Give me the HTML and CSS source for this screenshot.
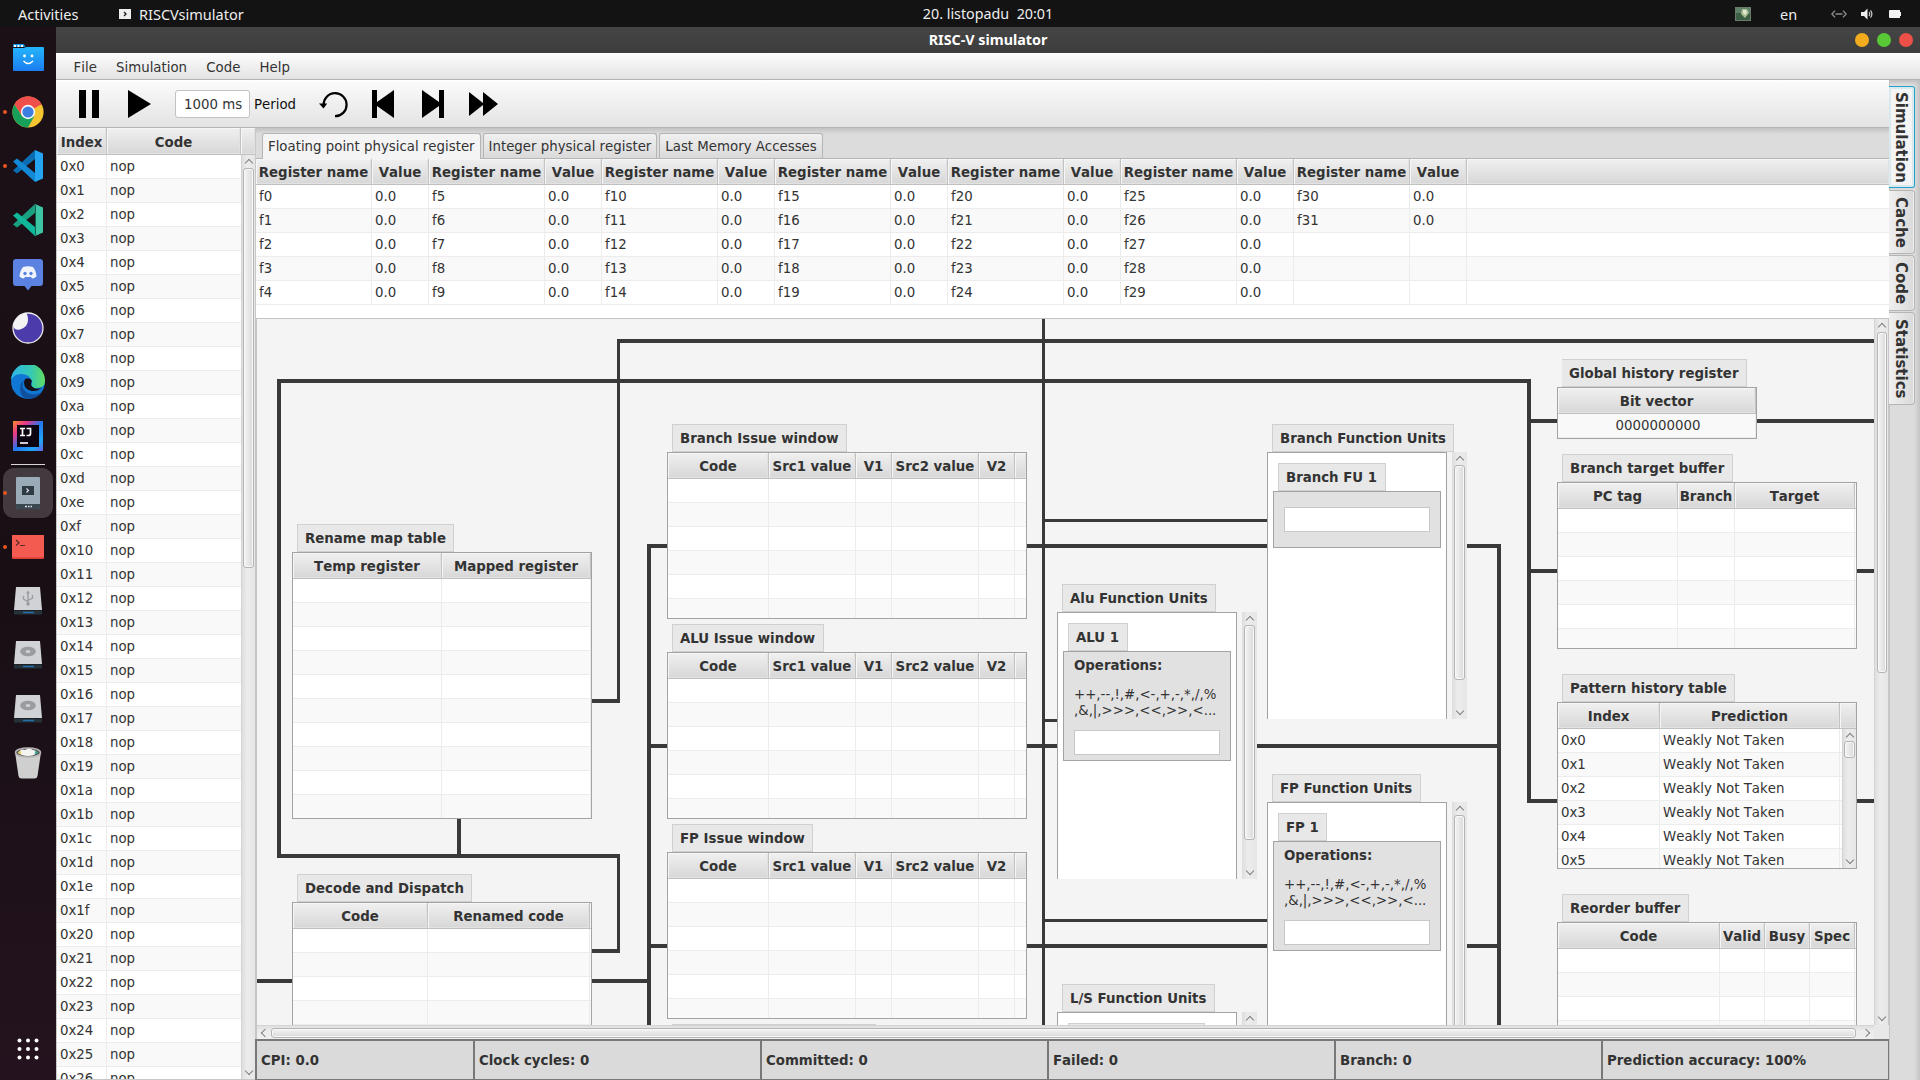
FILE: index.html
```html
<!DOCTYPE html>
<html lang="en">
<head>
<meta charset="utf-8">
<title>RISC-V simulator</title>
<link rel="stylesheet" href="styles.css">
</head>
<body>
<header class="panel">
  <div class="panel-left">
    <span class="activities">Activities</span>
    <svg class="app-glyph" width="12" height="10" viewBox="0 0 12 10"><rect width="12" height="10" fill="#eee"/><path d="M5 3l2 2-2 2" fill="none" stroke="#222" stroke-width="1.4"/></svg>
    <span>RISCVsimulator</span>
  </div>
  <div class="clock">20. listopadu&nbsp; 20:01</div>
  <div class="tray">
    <svg class="tray-picture" width="16" height="14" viewBox="0 0 16 14"><rect width="16" height="14" fill="#6b7b6b"/><rect x="1" y="1" width="14" height="12" fill="#3a5f45"/><path d="M1 1h14v5H1z" fill="#5d8066"/><path d="M7 2h5l2 4-4 5-4-4z" fill="#a9bd92"/><path d="M8 3h3l1 3-2 2-2-2z" fill="#e0e6cc"/></svg>
    <span class="lang">en</span>
    <svg class="tray-net" width="16" height="8" viewBox="0 0 16 8" fill="none" stroke="#8c8c8c" stroke-width="1.4"><path d="M4 .6L.9 4 4 7.4M12 .6L15.100 4 12 7.400M4.500 4h7"/></svg>
    <svg class="tray-sound" width="13" height="12" viewBox="0 0 13 12"><path d="M0 4h3l3.500-3.500v11L3 8H0z" fill="#eee"/><path d="M8 4q1.500 2 0 4M9.500 2.300q2.800 3.700 0 7.400" fill="none" stroke="#ccc" stroke-width="1.200"/></svg>
    <svg class="tray-battery" width="12" height="8" viewBox="0 0 12 8"><path d="M1 0h10v2h1v4h-1v2H1q-1 0-1-1V1q0-1 1-1z" fill="#f2f2f2"/></svg>
  </div>
</header>

<div class="desktop">
<nav class="dock">
  <div class="dock-item"><svg width="32" height="30" viewBox="0 0 32 30"><defs><linearGradient id="gFiles" x2="0" y2="1"><stop offset="0" stop-color="#25b5fb"/><stop offset="1" stop-color="#1a7cf0"/></linearGradient></defs><path d="M1 2q0-1 1-1h9q1 0 1.500 1l.500 2H1z" fill="#1596e8"/><path d="M1 5h11l2-1h17q1 0 1 1v22q0 1-1 1H2q-1 0-1-1z" fill="url(#gFiles)"/><path d="M2 2h2v2H2zM5.500 2h2v2h-2zM9 2h2v2H9z" fill="#fff"/><circle cx="12.500" cy="13" r="1.400" fill="#fff"/><circle cx="20" cy="13" r="1.400" fill="#fff"/><path d="M11.500 18q4.700 5 9.500 0" fill="none" stroke="#fff" stroke-width="1.400"/></svg></div>
  <div class="dock-item running"><svg width="32" height="34" viewBox="-16 -17 32 34"><circle r="15.600" fill="#f5c431"/><path d="M0 0L-13.500-7.800A15.600 15.600 0 0 1 13.500-7.800z" fill="#ee4f4b"/><path d="M-13.500-7.800A15.600 15.600 0 0 0 0 15.600L6.500 3.800-6 4z" fill="#16a05a"/><path d="M0-7.200h13.800A15.600 15.600 0 0 0-13.500-7.800L-6.200 3.600z" fill="#ee4f4b"/><circle r="7.200" fill="#f6f6f6"/><circle r="5.600" fill="#3b7de0"/></svg></div>
  <div class="dock-item running"><svg width="30" height="32" viewBox="0 0 30 32"><path d="M22 0l8 3.500v25L22 32z" fill="#25a4f2"/><path d="M22 0v9L4 23.500 0 20.500z" fill="#0a6eb5"/><path d="M22 32v-9L4 8.500 0 11.500z" fill="#1389d6"/></svg></div>
  <div class="dock-item"><svg width="30" height="32" viewBox="0 0 30 32"><path d="M22 0l8 3.500v25L22 32z" fill="#3cc4a4"/><path d="M22 0v9L4 23.500 0 20.500z" fill="#1a9f80"/><path d="M22 32v-9L4 8.500 0 11.500z" fill="#10b79a"/><path d="M22.500 1v30" stroke="#12614f" stroke-width="1"/></svg></div>
  <div class="dock-item"><svg width="30" height="33" viewBox="0 0 30 33"><path d="M3 1h24q3 0 3 3v21q0 3-3 3h-8.500L15 32.500 11.500 28H3q-3 0-3-3V4q0-3 3-3z" fill="#5b82e0"/><path d="M10 9q5-1.500 10 0 3 3.500 3.500 9.500-2 1.800-4.500 2l-1-1.800q-3 .800-6 0L11 20.500q-2.500-.200-4.500-2Q7 12.500 10 9z" fill="#f1f4fd"/><circle cx="12" cy="15.500" r="1.700" fill="#5b82e0"/><circle cx="18" cy="15.500" r="1.700" fill="#5b82e0"/></svg></div>
  <div class="dock-item"><svg width="32" height="32" viewBox="0 0 32 32"><circle cx="16" cy="16" r="15" fill="#4c3cab" stroke="#eee" stroke-width="1.300"/><path d="M16 1A15 15 0 0 0 1.200 14Q3 19 8 17.500 16 15 16 8 16 3 14 1z" fill="#f3f3f3"/></svg></div>
  <div class="dock-item"><svg width="34" height="34" viewBox="0 0 34 34"><defs><linearGradient id="gEdge"><stop offset="0" stop-color="#2eb5e8"/><stop offset=".6" stop-color="#36c9b0"/><stop offset="1" stop-color="#62dd60"/></linearGradient></defs><circle cx="17" cy="17" r="16.900" fill="#1177d4"/><path d="M0 15A17 17 0 0 1 34 16q0 7-8 7-6 0-5.500-3 1-2 0-5Q18 9 10 9 3 9 0 15z" fill="url(#gEdge)"/><path d="M13 15q-4 7 2 12 7 5 16 0-5 7-14 7Q9 32 9 24q0-6 4-9z" fill="#10509d"/><path d="M14 14q5-2 7 2-2 3 0 5.500 4 4 10 1-4 4-10 3.500-8-1-8-9z" fill="#170f16"/></svg></div>
  <div class="dock-item"><svg width="30" height="30" viewBox="0 0 30 30"><defs><linearGradient id="gIj" x2="1" y2="1"><stop offset="0" stop-color="#ff8b2b"/><stop offset=".25" stop-color="#e8368a"/><stop offset=".5" stop-color="#2277f0"/><stop offset=".8" stop-color="#21a5f6"/><stop offset="1" stop-color="#6b60e8"/></linearGradient></defs><rect width="30" height="30" fill="url(#gIj)"/><rect x="4" y="4" width="22" height="22" fill="#0c0410"/><path d="M7 7.500h5M7 14.500h5M9.500 7.500v7M13.500 7.500h4v5q0 2-2 2h-2" fill="none" stroke="#fff" stroke-width="1.700"/><path d="M7 22h8" stroke="#fff" stroke-width="1.600"/></svg></div>
  <div class="dock-separator"></div>
  <div class="dock-item running active"><svg width="24" height="34" viewBox="0 0 24 34"><rect width="24" height="32" y="1" rx="1" fill="#9aaab6"/><path d="M0 28h24v4q0 1-1 1H1q-1 0-1-1z" fill="#3a474f"/><rect x="6" y="10" width="12" height="9" fill="#2f3b42"/><path d="M10.500 12.500l2 2-2 2" fill="none" stroke="#dde" stroke-width="1.200"/><path d="M9 30.500h2M12 30.500h1.500M14.500 30.500h1.500" stroke="#dde" stroke-width="1.500"/></svg></div>
  <div class="dock-item running"><svg width="32" height="24" viewBox="0 0 32 24"><rect width="32" height="24" rx="1" fill="#d63c32"/><rect width="32" height="22.500" rx="1" fill="#f35a50"/><path d="M4 5l3 2.800L4 10.500M8 10.500h5" fill="none" stroke="#5c2a2a" stroke-width="1.200"/></svg></div>
  <div class="dock-item"><svg width="28" height="28" viewBox="0 0 28 28"><path d="M2 0h24l2 23H0z" fill="#d0d2d6"/><path d="M0 23.500h28v4H0z" fill="#26323a"/><path d="M9 25.500h11" stroke="#2470a8" stroke-width="1.500"/><path d="M14 5v12M9.500 9v3l4.500 3M18.500 8v3L14 13.500" fill="none" stroke="#9a9ca0" stroke-width="1.400"/><path d="M14 3.500l2 3h-4z" fill="#9a9ca0"/><circle cx="14" cy="17" r="1.800" fill="#9a9ca0"/></svg></div>
  <div class="dock-item"><svg width="28" height="28" viewBox="0 0 28 28"><path d="M2 0h24l2 23H0z" fill="#d0d2d6"/><path d="M0 23.500h28v4H0z" fill="#26323a"/><path d="M9 25.500h11" stroke="#2470a8" stroke-width="1.500"/><ellipse cx="14" cy="10.500" rx="7.800" ry="4.800" fill="#9a9ca0"/><ellipse cx="14" cy="10.500" rx="2.400" ry="1.500" fill="#d0d2d6"/></svg></div>
  <div class="dock-item"><svg width="28" height="28" viewBox="0 0 28 28"><path d="M2 0h24l2 23H0z" fill="#d0d2d6"/><path d="M0 23.500h28v4H0z" fill="#26323a"/><path d="M9 25.500h11" stroke="#2470a8" stroke-width="1.500"/><ellipse cx="14" cy="10.500" rx="7.800" ry="4.800" fill="#9a9ca0"/><ellipse cx="14" cy="10.500" rx="2.400" ry="1.500" fill="#d0d2d6"/></svg></div>
  <div class="dock-item"><svg width="28" height="32" viewBox="0 0 28 32"><path d="M1 5h26l-3.500 24q-.500 2.500-3 2.500h-13q-2.500 0-3-2.500z" fill="#cfcfcf"/><ellipse cx="14" cy="5.500" rx="12.500" ry="4.500" fill="#555" stroke="#b5b5b5" stroke-width="1.500"/><path d="M4 6q3-5 7-3 4-3 8 0 4 1 4 3-3 3-9 3T4 6z" fill="#f4f4f0"/><path d="M3.500 5.500l3-2 1 4z" fill="#e8ce5a"/><path d="M24.500 5.500l-3-2-1 4z" fill="#37a895"/></svg></div>
  <div class="dock-item show-apps"><svg width="24" height="24" viewBox="0 0 24 24" fill="#fff"><circle cx="3.500" cy="3.500" r="2"/><circle cx="12" cy="3.500" r="2"/><circle cx="20.500" cy="3.500" r="2"/><circle cx="3.500" cy="12" r="2"/><circle cx="12" cy="12" r="2"/><circle cx="20.500" cy="12" r="2"/><circle cx="3.500" cy="20.500" r="2"/><circle cx="12" cy="20.500" r="2"/><circle cx="20.500" cy="20.500" r="2"/></svg></div>
</nav>

<div class="window">
  <div class="titlebar">
    <span class="title">RISC-V simulator</span>
    <span class="dot minimize"></span><span class="dot maximize"></span><span class="dot close"></span>
  </div>
  <div class="menubar"><span>File</span><span>Simulation</span><span>Code</span><span>Help</span></div>

  <div class="body">
    <div class="main">
      <div class="toolbar">
        <svg class="tb-pause" width="22" height="28" viewBox="0 0 22 28"><path d="M1 0h7v28H1zM14 0h7v28h-7z"/></svg>
        <svg class="tb-play" width="23" height="28" viewBox="0 0 23 28"><path d="M0 0l23 14L0 28z"/></svg>
        <span class="period-field">1000 ms</span>
        <span class="period-label">Period</span>
        <svg class="tb-reset" width="29" height="27" viewBox="0 0 29 27"><path d="M4.600 14A11.500 11.500 0 1 1 16 25.200" fill="none" stroke="#000" stroke-width="2.200"/><path d="M0 12.500h8.200L4.500 17.500z"/></svg>
        <svg class="tb-prev" width="22" height="28" viewBox="0 0 22 28"><path d="M0 0h5v12L22 0v28L5 16v12H0z"/></svg>
        <svg class="tb-next" width="22" height="28" viewBox="0 0 22 28"><path d="M22 0h-5v12L0 0v28l17-12v12h5z"/></svg>
        <svg class="tb-fast" width="29" height="24" viewBox="0 0 29 24"><path d="M0 0l14 11V0l15 12-15 12V13L0 24z"/></svg>
      </div>

      <div class="workspace">
        <section class="code-pane">
          <div class="head code-cols"><span>Index</span><span>Code</span><span></span></div>
          <div class="code-view">
            <div class="code-rows" id="code-rows"></div>
            <div class="vscroll"><i class="chev up"></i><b class="thumb code-thumb"></b><i class="chev down"></i></div>
          </div>
        </section>

        <section class="center">
          <div class="tabs"><span class="tab selected">Floating point physical register</span><span class="tab">Integer physical register</span><span class="tab">Last Memory Accesses</span></div>
          <div class="registers">
            <div class="head reg-cols" id="reg-head"></div>
            <div id="reg-rows"></div>
          </div>

          <div class="scroller">
            <div class="canvas">
              <svg class="wires" width="1617" height="706" viewBox="257 319 1617 706" fill="#393939" shape-rendering="crispEdges">
                <path d="M617 339h1257v4H617zM617 339h3v364h-3zM592 699h28v4h-28z"/>
                <path d="M277 379h1254v4H277zM277 379h4v479h-4zM277 854h343v4H277zM457 819h4v35h-4zM617 854h3v99h-3zM592 949h28v4h-28z"/>
                <path d="M257 979h35v4h-35zM592 979h59v4h-59zM647 544h4v481h-4zM647 544h20v4h-20zM647 744h20v4h-20zM647 944h20v4h-20z"/>
                <path d="M1027 544h240v4h-240zM1027 744h30v4h-30zM1027 944h240v4h-240zM1042 319h3v706h-3z"/>
                <path d="M1045 519h222v3h-222zM1045 719h12v3h-12zM1045 919h222v3h-222z"/>
                <path d="M1497 544h4v481h-4zM1467 544h30v4h-30zM1257 744h240v4h-240zM1467 944h30v4h-30z"/>
                <path d="M1527 379h4v424h-4zM1531 419h26v4h-26zM1757 419h117v4h-117zM1531 569h26v4h-26zM1857 569h17v4h-17zM1531 799h26v4h-26zM1857 799h17v4h-17z"/>
              </svg>

              <div class="node n-rename"><h3>Rename map table</h3>
                <div class="table rename-cols" data-rows="10"><div class="head"><span>Temp register</span><span>Mapped register</span><span></span></div></div></div>
              <div class="node n-decode"><h3>Decode and Dispatch</h3>
                <div class="table decode-cols" data-rows="6"><div class="head"><span>Code</span><span>Renamed code</span><span></span></div></div></div>

              <div class="node issue n-issue-branch"><h3>Branch Issue window</h3>
                <div class="table issue-cols" data-rows="6"><div class="head"><span>Code</span><span>Src1 value</span><span>V1</span><span>Src2 value</span><span>V2</span><span></span></div></div></div>
              <div class="node issue n-issue-alu"><h3>ALU Issue window</h3>
                <div class="table issue-cols" data-rows="6"><div class="head"><span>Code</span><span>Src1 value</span><span>V1</span><span>Src2 value</span><span>V2</span><span></span></div></div></div>
              <div class="node issue n-issue-fp"><h3>FP Issue window</h3>
                <div class="table issue-cols" data-rows="6"><div class="head"><span>Code</span><span>Src1 value</span><span>V1</span><span>Src2 value</span><span>V2</span><span></span></div></div></div>
              <div class="node issue n-issue-ls"><h3></h3></div>

              <div class="node units n-fu-branch"><h3>Branch Function Units</h3>
                <div class="units-view"><div class="units-list"><h3>Branch FU 1</h3><div class="unit"><div class="field"></div></div></div>
                <div class="vscroll"><i class="chev up"></i><b class="thumb"></b><i class="chev down"></i></div></div></div>
              <div class="node units n-fu-alu"><h3>Alu Function Units</h3>
                <div class="units-view"><div class="units-list"><h3>ALU 1</h3><div class="unit with-ops"><strong>Operations:</strong><p>++,--,!,#,&lt;-,+,-,*,/,%<br>,&amp;,|,&gt;&gt;&gt;,&lt;&lt;,&gt;&gt;,&lt;...</p><div class="field"></div></div></div>
                <div class="vscroll"><i class="chev up"></i><b class="thumb"></b><i class="chev down"></i></div></div></div>
              <div class="node units n-fu-fp"><h3>FP Function Units</h3>
                <div class="units-view"><div class="units-list"><h3>FP 1</h3><div class="unit with-ops"><strong>Operations:</strong><p>++,--,!,#,&lt;-,+,-,*,/,%<br>,&amp;,|,&gt;&gt;&gt;,&lt;&lt;,&gt;&gt;,&lt;...</p><div class="field"></div></div></div>
                <div class="vscroll"><i class="chev up"></i><b class="thumb"></b><i class="chev down"></i></div></div></div>
              <div class="node units n-fu-ls"><h3>L/S Function Units</h3>
                <div class="units-view"><div class="units-list"><h3></h3></div>
                <div class="vscroll"><i class="chev up"></i><b class="thumb"></b><i class="chev down"></i></div></div></div>

              <div class="node n-ghr"><h3>Global history register</h3>
                <div class="table ghr-cols"><div class="head"><span>Bit vector</span><span></span></div><div class="row"><span>0000000000</span><span></span></div></div></div>
              <div class="node n-btb"><h3>Branch target buffer</h3>
                <div class="table btb-cols" data-rows="6"><div class="head"><span>PC tag</span><span>Branch</span><span>Target</span><span></span></div></div></div>
              <div class="node n-pht"><h3>Pattern history table</h3>
                <div class="table pht-cols"><div class="head"><span>Index</span><span>Prediction</span><span></span></div>
                  <div class="pht-view"><div id="pht-rows"></div><div class="vscroll"><i class="chev up"></i><b class="thumb pht-thumb"></b><i class="chev down"></i></div></div></div></div>
              <div class="node n-rob"><h3>Reorder buffer</h3>
                <div class="table rob-cols" data-rows="5"><div class="head"><span>Code</span><span>Valid</span><span>Busy</span><span>Spec</span><span></span></div></div></div>
            </div>
            <div class="vscroll canvas-v"><i class="chev up"></i><b class="thumb canvas-thumb"></b><i class="chev down"></i></div>
            <div class="hscroll"><i class="chev left"></i><b class="thumb"></b><i class="chev right"></i></div>
          </div>

          <footer class="stats"><span>CPI: 0.0</span><span>Clock cycles: 0</span><span>Committed: 0</span><span>Failed: 0</span><span>Branch: 0</span><span>Prediction accuracy: 100%</span></footer>
        </section>
      </div>
    </div>

    <aside class="side-tabs"><span class="side-tab focused t-simulation">Simulation</span><span class="side-tab t-cache">Cache</span><span class="side-tab t-code">Code</span><span class="side-tab t-statistics">Statistics</span></aside>
  </div>
</div>
</div>
<script src="app.js"></script>
</body>
</html>
```

FILE: styles.css
```css
* { box-sizing: border-box; }

body {
  margin: 0;
  width: 1920px;
  height: 1080px;
  overflow: hidden;
  display: flex;
  flex-direction: column;
  background: #1b1016;
  color: #333;
  font: 13.333px/16px "DejaVu Sans", sans-serif;
  font-kerning: none;
}
svg { display: block; flex: none; }
h3, p { margin: 0; }

/* system panel */
.panel {
  height: 27px;
  flex: none;
  display: grid;
  grid-template-columns: 922px 132px 1fr;
  align-items: center;
  background: #131313;
  color: #eee;
  font: 14.5px/26px "Noto Sans", sans-serif;
}
.panel-left { display: flex; align-items: center; padding-left: 18px; }
.activities { width: 101px; }
.app-glyph { margin-right: 8px; }
.clock { text-align: center; white-space: nowrap; font-size: 14.3px; line-height: 25px; padding-bottom: 1px; }
.tray { display: flex; align-items: center; padding-left: 681px; }
.lang { width: 51px; padding-left: 29px; box-sizing: content-box; }
.tray-net { margin-right: 14px; }
.tray-sound { margin-right: 15px; }

.desktop { flex: 1; display: flex; min-height: 0; }

/* dock */
.dock {
  width: 56px;
  flex: none;
  display: flex;
  flex-direction: column;
  padding: 4px 0 4px;
  background: linear-gradient(#1c1017, #180f15 55%, #24131e);
}
.dock-item {
  height: 54px;
  flex: none;
  display: flex;
  align-items: center;
  justify-content: center;
  position: relative;
}
.dock-item.running::before {
  content: "";
  position: absolute;
  left: 3px;
  top: 25px;
  width: 4px;
  height: 4px;
  border-radius: 50%;
  background: #e95420;
}
.dock-item.active { height: 50px; margin: 2px 3px; border-radius: 11px; background: #433a40; }
.dock-item.active::before { left: 0; top: 23px; }
.dock-separator { height: 1px; flex: none; margin: 1px 11px; background: #d8d5d6; }
.show-apps { margin-top: auto; }

/* window frame */
.window { flex: 1; display: flex; flex-direction: column; min-width: 0; background: #f4f4f4; }
.titlebar {
  height: 26px;
  flex: none;
  display: flex;
  align-items: center;
  padding-right: 7px;
  background: linear-gradient(#454545, #3d3d3d);
  color: #fff;
}
.title { flex: 1; padding-left: 73px; text-align: center; font: bold 14.3px/26px "Noto Sans", sans-serif; }
.dot { width: 14px; height: 14px; margin-left: 8px; border-radius: 50%; }
.minimize { background: #f2ac1e; }
.maximize { background: #59c837; }
.close { background: #ec5049; }
.menubar {
  height: 27px;
  flex: none;
  display: flex;
  align-items: center;
  padding-left: 8px;
  background: linear-gradient(#fdfdfd, #e3e3e3);
  border-bottom: 1px solid #b5b5b5;
}
.menubar span { padding: 3px 9.6px 0; }

.body { flex: 1; display: flex; min-height: 0; }
.main { width: 1833px; flex: none; display: flex; flex-direction: column; }

.toolbar {
  height: 48px;
  flex: none;
  display: flex;
  align-items: center;
  padding: 1px 0 0 22px;
  background: linear-gradient(#fff, #fafafa 3px, #e3e3e3);
  border-bottom: 1px solid #b5b5b5;
}
.tb-play { margin-left: 28px; }
.period-field {
  width: 75px;
  height: 28px;
  margin-left: 24px;
  padding-left: 8px;
  border: 1px solid #c2c2c2;
  border-radius: 3px;
  background: #fff;
  line-height: 28px;
}
.period-label { width: 65px; padding: 1px 0 0 4px; color: #111; }
.tb-reset { margin-left: 4px; }
.tb-prev { margin-left: 24px; }
.tb-next { margin-left: 28px; }
.tb-fast { margin-left: 25px; }

.workspace { flex: 1; display: flex; min-height: 0; }

/* tables */
.head, .row { display: grid; grid-template-columns: var(--cols); }
.head {
  height: 26px;
  background: linear-gradient(#f0f0f0, #d7d7d7);
  border-bottom: 1px solid #c0c0c0;
  font-weight: bold;
  line-height: 27px;
  text-align: center;
  white-space: nowrap;
  grid-template-rows: 25px;
}
.head span {
  min-width: 0;
  border-right: 1px solid #c3c3c3;
  box-shadow: inset 1px 1px 0 #f6f6f6, inset -1px -1px 0 #e2e2e2;
}
.head span:last-child { border-right: 0; }
.row { height: 24px; line-height: 23px; background: #fff; border-bottom: 1px solid #ececec; }
.row:nth-child(even) { background: #f9f9f9; }
.row span { padding-left: 3px; border-right: 1px solid #ececec; min-width: 0; white-space: nowrap; overflow: hidden; }
.row span:last-child { border-right: 0; }

.code-pane {
  width: 200px;
  flex: none;
  display: flex;
  flex-direction: column;
  border: 1px solid #c8c8c8;
  border-top: 0;
}
.code-pane .head { height: 27px; grid-template-rows: 26px; line-height: 29px; flex: none; }
.code-cols, .code-rows { --cols: 50px 134px 1fr; }
.code-view { flex: 1; display: flex; min-height: 0; }
.code-rows { width: 184px; overflow: hidden; }
.code-rows .row { grid-template-columns: 50px 134px; }

/* scroll bars */
.vscroll, .hscroll { display: flex; align-items: center; flex: none; }
.vscroll {
  width: 14px;
  flex-direction: column;
  border-left: 1px solid #d4d4d4;
  background: linear-gradient(90deg, #dedede, #ececec 40%, #e6e6e6);
}
.hscroll {
  border-top: 1px solid #d4d4d4;
  background: linear-gradient(#e0e0e0, #ececec 40%, #f0f0f0);
}
.thumb { border: 1px solid #b4b4b4; border-radius: 3px; flex: none; box-shadow: inset 0 0 0 1px #f8f8f8; }
.vscroll .thumb { width: 11px; background: linear-gradient(90deg, #f4f4f4, #dadada); }
.hscroll .thumb { height: 10px; background: linear-gradient(#f4f4f4, #dadada); }
.chev { width: 6px; height: 6px; flex: none; border: solid #808080; border-width: 1.3px 0 0 1.3px; }
.chev.up { transform: rotate(45deg); margin: 5px 0 2px; }
.chev.down { transform: rotate(225deg); margin: auto 0 5px; }
.chev.left { transform: rotate(-45deg); margin: 0 3px 0 5px; }
.chev.right { transform: rotate(135deg); margin: 0 5px 0 auto; }
.code-thumb { height: 400px; }

/* centre column */
.center { width: 1633px; flex: none; display: flex; flex-direction: column; }
.tabs {
  height: 31px;
  flex: none;
  display: flex;
  align-items: flex-end;
  gap: 2px;
  padding-left: 6px;
  background: linear-gradient(#c2c2c2, #dcdcdc 6px);
  border-bottom: 1px solid #b5b5b5;
}
.tab {
  height: 25px;
  padding: 0 5px;
  border: 1px solid #b5b5b5;
  border-bottom: 0;
  border-radius: 3px 3px 0 0;
  background: linear-gradient(#f0f0f0, #dadada);
  line-height: 25px;
  white-space: nowrap;
}
.tab.selected { height: 26px; margin-bottom: -1px; background: #f4f4f4; }
.registers { height: 160px; flex: none; background: #fff; border-bottom: 1px solid #c4c4c4; overflow: hidden; }
.registers { --cols: repeat(7, 116px 57px) 1fr; }

.scroller {
  flex: none;
  display: grid;
  grid-template: 706px 14px / 1617px 15px;
  padding-left: 2px;
  margin-left: -1px;
  background: #e8e8e8;
  box-shadow: inset 2px 0 0 #c6c6c6;
}
.canvas { position: relative; overflow: hidden; background: #f4f4f4; }
.wires { position: absolute; left: 0; top: 0; }
.canvas-v { width: 15px; border-right: 1px solid #c6c6c6; }
.canvas-v .thumb { width: 10px; }
.canvas-thumb { height: 341px; }
.hscroll .thumb { width: 1585px; }

/* diagram blocks */
.node { position: absolute; }
.node h3 {
  width: max-content;
  height: 28px;
  margin-left: 5px;
  padding: 0 7.5px 0 7px;
  border: 1px solid #d0d0d0;
  background: #e8e8e8;
  font: bold 13.333px/27px "DejaVu Sans", sans-serif;
  white-space: nowrap;
}
.table { border: 1px solid #a3a3a3; background: #fff; overflow: hidden; }

.rename-cols { --cols: 149px 149px 1fr; width: 300px; height: 267px; }
.decode-cols { --cols: 135px 162px 1fr; width: 300px; height: 167px; }
.issue-cols { --cols: 101px 87px 36px 87px 36px 1fr; width: 360px; height: 167px; }
.ghr-cols { --cols: 198px 0; width: 200px; height: 52px; text-align: center; }
.btb-cols { --cols: 120px 57px 120px 1fr; width: 300px; height: 167px; }
.pht-cols { --cols: 102px 180px 1fr; width: 300px; height: 167px; }
.rob-cols { --cols: 162px 45px 45px 45px 1fr; width: 300px; height: 167px; }

.n-rename { left: 35px; top: 205px; }
.n-decode { left: 35px; top: 555px; }
.n-issue-branch { left: 410px; top: 105px; }
.n-issue-alu { left: 410px; top: 305px; }
.n-issue-fp { left: 410px; top: 505px; }
.n-issue-ls { left: 410px; top: 705px; }
.n-issue-ls h3 { width: 204px; }
.n-fu-branch { left: 1010px; top: 105px; }
.n-fu-alu { left: 800px; top: 265px; }
.n-fu-fp { left: 1010px; top: 455px; }
.n-fu-ls { left: 800px; top: 665px; }
.n-ghr { left: 1300px; top: 40px; }
.n-ghr h3 { border-left: 0; }
.n-btb { left: 1300px; top: 135px; }
.n-pht { left: 1300px; top: 355px; }
.n-rob { left: 1300px; top: 575px; }

.pht-view { display: flex; height: 139px; }
.pht-view > div:first-child { width: 284px; }
.pht-view .row { grid-template-columns: 102px 180px 1fr; }
.pht-view .chev.up { margin-bottom: 1px; }
.pht-thumb { height: 17px; }

.units-view { display: flex; gap: 5px; height: 267px; }
.units-list { width: 180px; padding: 10px 5px; border: 1px solid #a3a3a3; border-bottom: 0; background: #fff; }
.units .vscroll { width: 15px; border-left: 0; }
.units .thumb { height: 215px; }
.unit { width: 168px; padding: 15px 10px; border: 1px solid #a3a3a3; background: #e1e1e1; }
.unit.with-ops { padding: 6px 10px 5px; }
.unit p { height: 32px; margin: 13px -5px 11px 0; white-space: nowrap; }
.unit strong { display: block; }
.field { width: 146px; height: 25px; border: 1px solid #c8c8c8; background: #fff; }
.n-fu-ls .units-list h3 { width: 137px; }

/* status bar */
.stats {
  flex: 1;
  display: grid;
  grid-template-columns: 218px 287px 287px 287px 267px 1fr;
  margin-left: -1px;
  background: #dadada;
  border-top: 2px solid #787878;
  border-bottom: 1px solid #787878;
  border-right: 1px solid #787878;
  font-weight: bold;
  line-height: 40px;
  grid-template-rows: 38px;
}
.stats span { padding-left: 4px; border-left: 2px solid #787878; }

/* vertical tabs */
.side-tabs {
  flex: 1;
  display: flex;
  flex-direction: column;
  gap: 1px;
  padding-top: 6px;
  background:
    linear-gradient(#c0c0c0, transparent 5px),
    linear-gradient(90deg, #c6c6c6 1px, #dcdcdc 1px, #dcdcdc 25px, #c4c4c4);
}
.side-tab {
  width: 26px;
  display: flex;
  align-items: center;
  justify-content: center;
  padding-right: 2px;
  border: 1px solid #b5b5b5;
  border-left: 0;
  border-radius: 0 4px 4px 0;
  background: linear-gradient(90deg, #f0f0f0, #d9d9d9);
  box-shadow: inset -1px 0 0 #efefef;
  writing-mode: vertical-rl;
  font: bold 15px/23px "DejaVu Sans", sans-serif;
}
.side-tab.focused { border-color: #22a1cb; border-radius: 0 3px 3px 0; background: #f4f4f4; box-shadow: inset 0 0 0 2px #d8e9f0; }
.t-simulation { height: 102px; margin-bottom: 1px; }
.t-cache { height: 64px; }
.t-code { height: 56px; }
.t-statistics { height: 93px; }
```

FILE: app.js
```js
const row = cells => '<div class="row">' + cells.map(c => '<span>' + c + '</span>').join('') + '</div>';
const fill = (id, html) => { document.getElementById(id).innerHTML = html; };

// Program memory: every slot holds a nop until code is loaded.
fill('code-rows', Array.from({ length: 39 }, (_, i) => row(['0x' + i.toString(16), 'nop'])).join(''));

// Floating point registers f0..f31, five per column.
fill('reg-head', '<span>Register name</span><span>Value</span>'.repeat(7) + '<span></span>');
fill('reg-rows', Array.from({ length: 5 }, (_, r) => {
  const cells = [];
  for (let c = 0; c < 7; c++) {
    const n = c * 5 + r;
    cells.push(n < 32 ? 'f' + n : '', n < 32 ? '0.0' : '');
  }
  cells.push('');
  return row(cells);
}).join(''));

fill('pht-rows', Array.from({ length: 6 }, (_, i) => row(['0x' + i, 'Weakly Not Taken', ''])).join(''));

// Pipeline tables start out empty.
document.querySelectorAll('.table[data-rows]').forEach(table => {
  const columns = table.querySelectorAll('.head span').length;
  const body = document.createElement('div');
  body.innerHTML = row(Array(columns).fill('')).repeat(Number(table.dataset.rows));
  table.append(body);
});
```
